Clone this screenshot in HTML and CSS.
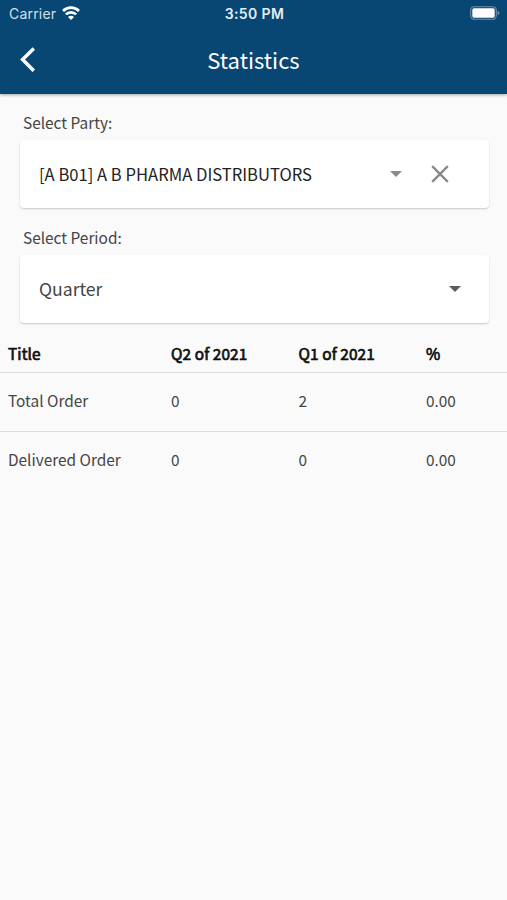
FILE: index.html
```html
<!DOCTYPE html>
<html lang="en">
<head>
  <meta charset="UTF-8" />
  <meta name="viewport" content="width=device-width, initial-scale=1.0"/>
  <title>Statistics</title>
  <link rel="stylesheet" href="styles.css">
</head>
<body>
  <header class="app-bar">
    <div class="status-bar">
      <div class="carrier">
        <span>Carrier</span>
        <svg class="wifi" width="18" height="14" viewBox="0 0 18 14" fill="none" stroke="#fff" stroke-width="2.7">
          <path d="M1 5a11.3 11.3 0 0 1 16 0"/>
          <path d="M3.9 8.4a7.2 7.2 0 0 1 10.2 0"/>
          <path d="M9 13.9l-3-3a4.2 4.2 0 0 1 6 0z" fill="#fff" stroke="none"/>
        </svg>
      </div>
      <span class="time">3:50 PM</span>
      <svg class="battery" width="30" height="14" viewBox="0 0 30 14">
        <rect x=".7" y=".7" width="25.6" height="12.6" rx="3.6" fill="none" stroke="#6f93b1" stroke-width="1.1"/>
        <rect x="2.3" y="2.3" width="22.4" height="9.4" rx="1.6" fill="#fff"/>
        <path d="M27.6 4.8c2.4.8 2.4 3.6 0 4.4z" fill="#6f93b1"/>
      </svg>
    </div>
    <div class="title-bar">
      <a class="back" href="#" aria-label="Back">
        <svg width="16" height="26" viewBox="0 0 16 26" fill="none" stroke="#fff" stroke-width="3.5">
          <path d="M13.8 2.4L2.6 13.6l11.2 11.2"/>
        </svg>
      </a>
      <h1>Statistics</h1>
    </div>
  </header>

  <main>
    <div class="field">
      <label>Select Party:</label>
      <div class="select party">
        <span class="value">[A B01] A B PHARMA DISTRIBUTORS</span>
        <svg class="arrow" width="12" height="6" viewBox="0 0 12 6"><path d="M0 0h12L6 6z" fill="#8a8a8a"/></svg>
        <svg class="clear" width="18" height="18" viewBox="0 0 18 18"><path d="M1.2 1.2l15.6 15.6M16.8 1.2L1.2 16.8" stroke="#8a8a8a" stroke-width="2.4"/></svg>
      </div>
    </div>
    <div class="field">
      <label>Select Period:</label>
      <div class="select period">
        <span class="value">Quarter</span>
        <svg class="arrow" width="12" height="6" viewBox="0 0 12 6"><path d="M0 0h12L6 6z" fill="#5c5c5c"/></svg>
      </div>
    </div>

    <table>
      <thead>
        <tr>
          <th class="col-title">Title</th>
          <th class="col-value">Q2 of 2021</th>
          <th class="col-value">Q1 of 2021</th>
          <th>%</th>
        </tr>
      </thead>
      <tbody>
        <tr><td>Total Order</td><td>0</td><td>2</td><td>0.00</td></tr>
        <tr><td>Delivered Order</td><td>0</td><td>0</td><td>0.00</td></tr>
      </tbody>
    </table>
  </main>
</body>
</html>
```
FILE: styles.css
```css
body {
  font-family: 'Noto Sans CJK SC', sans-serif;
  background: #fafafa;
  margin: 0;
  color: #454545;
}
.app-bar {
  height: 94px;
  background-color: #084673;
  color: #fff;
  box-shadow: 0 1px 3px rgba(0,0,0,0.35);
}
.status-bar {
  display: grid;
  grid-template-columns: 1fr auto 1fr;
  align-items: center;
  height: 27px;
  padding: 0 7px 0 9px;
  font-family: Inter, sans-serif;
}
.carrier {
  display: flex;
  align-items: center;
  gap: 6px;
  font-size: 14px;
  letter-spacing: 0.2px;
  color: #d5e0ea;
}
.wifi {
  margin-bottom: 2px;
}
.time {
  font-size: 14px;
  font-weight: 600;
  letter-spacing: 0.4px;
  color: #e6edf3;
}
.battery {
  justify-self: end;
  margin-bottom: 1px;
}
.title-bar {
  display: grid;
  grid-template-columns: 1fr auto 1fr;
  align-items: center;
  height: 64px;
}
.back {
  display: flex;
  padding-left: 20px;
}
h1 {
  margin: 0;
  font-size: 22px;
  font-weight: 400;
  line-height: 30px;
}
main {
  padding-top: 14px;
}
.field {
  margin: 0 18px 15px 20px;
}
label {
  display: block;
  height: 32px;
  padding-left: 3px;
  font-size: 15.4px;
  line-height: 29px;
}
.select {
  display: flex;
  align-items: center;
  height: 68px;
  padding: 0 28px 0 19px;
  box-sizing: border-box;
  background-color: #fff;
  border-radius: 4px;
  box-shadow: 0 1px 2px rgba(0,0,0,0.2);
}
.value {
  flex: 1;
  padding-bottom: 1px;
}
.party {
  padding-right: 40px;
  font-size: 16.6px;
  color: #222;
}
.clear {
  margin-left: 29px;
}
.period {
  font-size: 17.6px;
}
table {
  width: 100%;
  margin-top: -3px;
  border-collapse: collapse;
  table-layout: fixed;
}
th, td {
  text-align: left;
  font-size: 15.4px;
  white-space: nowrap;
}
th {
  height: 35px;
  padding: 0 0 2px 8px;
  border-bottom: 1px solid #ddd;
  color: #111;
  font-weight: 400;
  letter-spacing: 0.1px;
  -webkit-text-stroke: 0.7px #111;
}
td {
  height: 53px;
  padding: 0 0 5px 8px;
}
tbody tr + tr td {
  border-top: 1px solid #ddd;
}
.col-title { width: 155px; }
.col-value { width: 119.5px; }
```
